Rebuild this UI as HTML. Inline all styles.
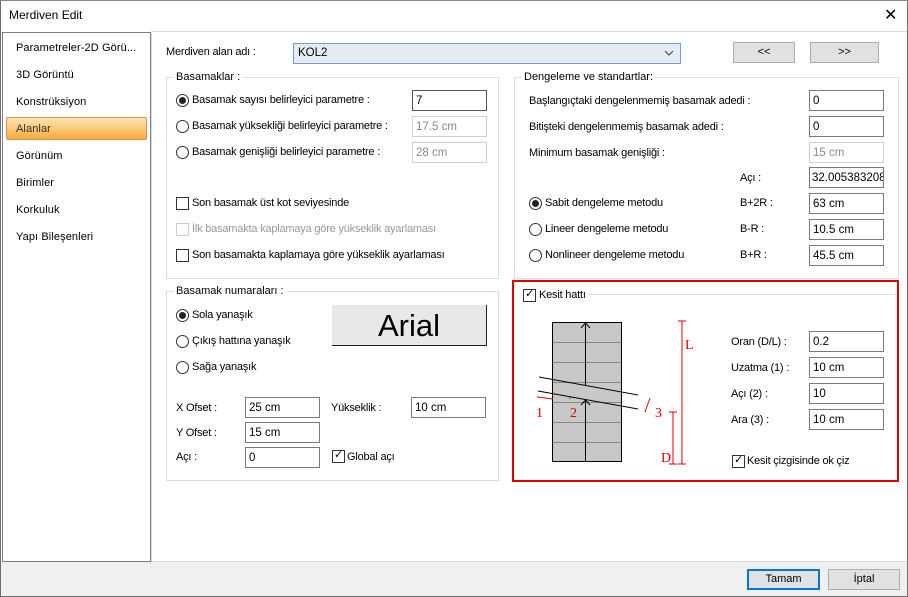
<!DOCTYPE html>
<html><head><meta charset="utf-8"><style>
*{box-sizing:border-box;margin:0;padding:0}
body{width:908px;height:597px;position:relative;background:#fff;font-family:"Liberation Sans",Arial,sans-serif;font-size:11px;color:#000;overflow:hidden}
.a{position:absolute;white-space:nowrap}
.t{position:absolute;white-space:nowrap;line-height:14px;letter-spacing:-0.2px}
.in{position:absolute;height:21px;width:75px;border:1px solid #7a7a7a;background:#fff;padding:3px 0 0 3px;line-height:14px;font-size:11.5px;overflow:hidden;white-space:nowrap}
.dis{border-color:#cfcfcf;color:#8a8a8a}
.rb{position:absolute;width:13px;height:13px;border:1px solid #333;border-radius:50%;background:#fff}
.rb.on::after{content:"";position:absolute;left:2px;top:2px;width:7px;height:7px;border-radius:50%;background:#222}
.cb{position:absolute;width:13px;height:13px;border:1px solid #333;background:#fff}
.cb.dis{border-color:#ccc}
.grp{position:absolute;border:1px solid #dcdcdc}
.gl{position:absolute;background:#fff;padding:0 2px;line-height:14px;top:-8px;left:7px}
.btn{position:absolute;background:#e1e1e1;border:1px solid #adadad;text-align:center;line-height:19px}
.side div{position:absolute;left:13px;font-size:11px;letter-spacing:0.1px}
</style></head><body>
<div class="a" style="left:0;top:0;width:908px;height:597px;border:1px solid #6e6e6e;border-top:1px solid #888"></div>
<div class="a" style="left:9px;top:8px;font-size:12px">Merdiven Edit</div>
<div class="a" style="left:884px;top:5px;font-size:16px">✕</div>
<div class="a" style="left:1px;top:562px;width:906px;height:34px;background:#f0f0f0"></div>
<div class="a side" style="left:2px;top:32px;width:149px;height:530px;border:1px solid #7a7f85;background:#fff">
<div style="top:9px">Parametreler-2D Görü...</div>
<div style="top:36px">3D Görüntü</div>
<div style="top:63px">Konstrüksiyon</div>
<div style="left:3px;top:84px;width:141px;height:23px;border:1px solid #c89a55;border-radius:2px;background:linear-gradient(#fde3b4,#fbc97a 50%,#f7a93c)"></div>
<div style="top:90px;color:#333">Alanlar</div>
<div style="top:117px">Görünüm</div>
<div style="top:144px">Birimler</div>
<div style="top:171px">Korkuluk</div>
<div style="top:198px">Yapı Bileşenleri</div>
</div>
<div class="a" style="left:151px;top:31px;width:756px;height:531px;border:1px solid #dcdcdc;border-right:none"></div>

<div class="t" style="left:166px;top:45px">Merdiven alan adı :</div>
<div class="a" style="left:293px;top:43px;width:388px;height:21px;background:#e5ecf3;border:1px solid #7a9cc6;padding:3px 0 0 4px;font-size:11.5px">KOL2</div>
<svg class="a" style="left:664px;top:50px" width="10" height="6"><polyline points="1,1 5,5 9,1" fill="none" stroke="#444"/></svg>
<div class="btn" style="left:733px;top:42px;width:62px;height:21px">&lt;&lt;</div>
<div class="btn" style="left:810px;top:42px;width:69px;height:21px">&gt;&gt;</div>

<div class="grp" style="left:166px;top:77px;width:333px;height:202px"><div class="gl">Basamaklar :</div></div>
<div class="rb on" style="left:176px;top:94px"></div><div class="t" style="left:192px;top:93px">Basamak sayısı belirleyici parametre :</div>
<div class="rb" style="left:176px;top:120px"></div><div class="t" style="left:192px;top:119px">Basamak yüksekliği belirleyici parametre :</div>
<div class="rb" style="left:176px;top:146px"></div><div class="t" style="left:192px;top:145px">Basamak genişliği belirleyici parametre :</div>
<div class="in" style="left:412px;top:90px;border-color:#555">7</div>
<div class="in dis" style="left:412px;top:116px">17.5 cm</div>
<div class="in dis" style="left:412px;top:142px">28 cm</div>
<div class="cb" style="left:176px;top:197px"></div><div class="t" style="left:192px;top:196px">Son basamak üst kot seviyesinde</div>
<div class="cb dis" style="left:176px;top:223px"></div><div class="t" style="left:192px;top:222px;color:#999">İlk basamakta kaplamaya göre yükseklik ayarlaması</div>
<div class="cb" style="left:176px;top:249px"></div><div class="t" style="left:192px;top:248px">Son basamakta kaplamaya göre yükseklik ayarlaması</div>

<div class="grp" style="left:166px;top:291px;width:333px;height:190px"><div class="gl">Basamak numaraları :</div></div>
<div class="rb on" style="left:176px;top:309px"></div><div class="t" style="left:192px;top:308px">Sola yanaşık</div>
<div class="rb" style="left:176px;top:335px"></div><div class="t" style="left:192px;top:334px">Çıkış hattına yanaşık</div>
<div class="rb" style="left:176px;top:361px"></div><div class="t" style="left:192px;top:360px">Sağa yanaşık</div>
<div class="a" style="left:332px;top:305px;width:155px;height:41px;background:#e8e8e8;border-right:1px solid #222;border-bottom:1px solid #222;text-align:center;font-size:31px;line-height:41px">Arial</div>
<div class="t" style="left:176px;top:401px">X Ofset :</div><div class="in" style="left:245px;top:397px">25 cm</div>
<div class="t" style="left:176px;top:426px">Y Ofset :</div><div class="in" style="left:245px;top:422px">15 cm</div>
<div class="t" style="left:176px;top:450px">Açı :</div><div class="in" style="left:245px;top:447px">0</div>
<div class="t" style="left:331px;top:401px">Yükseklik :</div><div class="in" style="left:411px;top:397px">10 cm</div>
<div class="cb" style="left:332px;top:450px"></div><div class="a" style="left:334px;top:448px;font-size:11px">✓</div><div class="t" style="left:347px;top:450px">Global açı</div>

<div class="grp" style="left:514px;top:77px;width:385px;height:202px"><div class="gl">Dengeleme ve standartlar:</div></div>
<div class="t" style="left:529px;top:94px">Başlangıçtaki dengelenmemiş basamak adedi :</div><div class="in" style="left:809px;top:90px">0</div>
<div class="t" style="left:529px;top:120px">Bitişteki dengelenmemiş basamak adedi :</div><div class="in" style="left:809px;top:116px">0</div>
<div class="t" style="left:529px;top:146px">Minimum basamak genişliği :</div><div class="in dis" style="left:809px;top:142px">15 cm</div>
<div class="t" style="left:740px;top:171px">Açı :</div><div class="in" style="left:809px;top:167px;padding-left:2px">32.005383208</div>
<div class="rb on" style="left:529px;top:197px"></div><div class="t" style="left:545px;top:196px">Sabit dengeleme metodu</div><div class="t" style="left:740px;top:196px">B+2R :</div><div class="in" style="left:809px;top:193px">63 cm</div>
<div class="rb" style="left:529px;top:223px"></div><div class="t" style="left:545px;top:222px">Lineer dengeleme metodu</div><div class="t" style="left:740px;top:222px">B-R :</div><div class="in" style="left:809px;top:219px">10.5 cm</div>
<div class="rb" style="left:529px;top:249px"></div><div class="t" style="left:545px;top:248px">Nonlineer dengeleme metodu</div><div class="t" style="left:740px;top:248px">B+R :</div><div class="in" style="left:809px;top:245px">45.5 cm</div>

<div class="a" style="left:512px;top:280px;width:387px;height:202px;border:2px solid #e00000"></div>
<div class="a" style="left:589px;top:294px;width:306px;height:1px;background:#dcdcdc"></div>
<div class="cb" style="left:523px;top:289px"></div><div class="a" style="left:525px;top:287px;font-size:11px">✓</div>
<div class="t" style="left:539px;top:288px">Kesit hattı</div>
<svg class="a" style="left:520px;top:310px" width="180" height="160" viewBox="520 310 180 160">
<rect x="552.5" y="322.5" width="69" height="139" fill="#c8c8c8" stroke="#000"/>
<g stroke="#888"><line x1="553" y1="342.5" x2="621" y2="342.5"/><line x1="553" y1="362.5" x2="621" y2="362.5"/><line x1="553" y1="382.5" x2="621" y2="382.5"/><line x1="553" y1="402.5" x2="621" y2="402.5"/><line x1="553" y1="422.5" x2="621" y2="422.5"/><line x1="553" y1="442.5" x2="621" y2="442.5"/></g>
<g stroke="#000" fill="none"><line x1="539" y1="377" x2="638" y2="395"/><line x1="538" y1="391" x2="638" y2="409"/>
<line x1="585.5" y1="323" x2="585.5" y2="385"/><polyline points="581,328 585.5,323 590,328"/>
<line x1="585.5" y1="400" x2="585.5" y2="461"/><polyline points="581,405 585.5,400 590,405"/></g>
<g stroke="#e00000" fill="none"><line x1="537" y1="397" x2="553" y2="399"/><line x1="570" y1="397" x2="570" y2="399"/><line x1="650" y1="398" x2="645" y2="412"/>
<line x1="682" y1="321" x2="682" y2="464"/><line x1="678" y1="321" x2="686" y2="321"/><line x1="678" y1="464" x2="686" y2="464"/>
<line x1="673" y1="412" x2="673" y2="464"/><line x1="669" y1="412" x2="677" y2="412"/><line x1="669" y1="464" x2="677" y2="464"/></g>
<g fill="#e00000" font-family="Liberation Serif,serif" font-size="14"><text x="536" y="417">1</text><text x="570" y="417">2</text><text x="655" y="417">3</text><text x="685" y="349">L</text><text x="661" y="462">D</text></g>
</svg>
<div class="t" style="left:731px;top:335px">Oran (D/L) :</div><div class="in" style="left:809px;top:331px">0.2</div>
<div class="t" style="left:731px;top:361px">Uzatma (1) :</div><div class="in" style="left:809px;top:357px">10 cm</div>
<div class="t" style="left:731px;top:387px">Açı (2) :</div><div class="in" style="left:809px;top:383px">10</div>
<div class="t" style="left:731px;top:413px">Ara (3) :</div><div class="in" style="left:809px;top:409px">10 cm</div>
<div class="cb" style="left:732px;top:455px"></div><div class="a" style="left:734px;top:453px;font-size:11px">✓</div>
<div class="t" style="left:747px;top:454px">Kesit çizgisinde ok çiz</div>

<div class="btn" style="left:747px;top:569px;width:73px;height:21px;border:2px solid #0078d7;line-height:17px">Tamam</div>
<div class="btn" style="left:828px;top:569px;width:72px;height:21px">İptal</div>
</body></html>
